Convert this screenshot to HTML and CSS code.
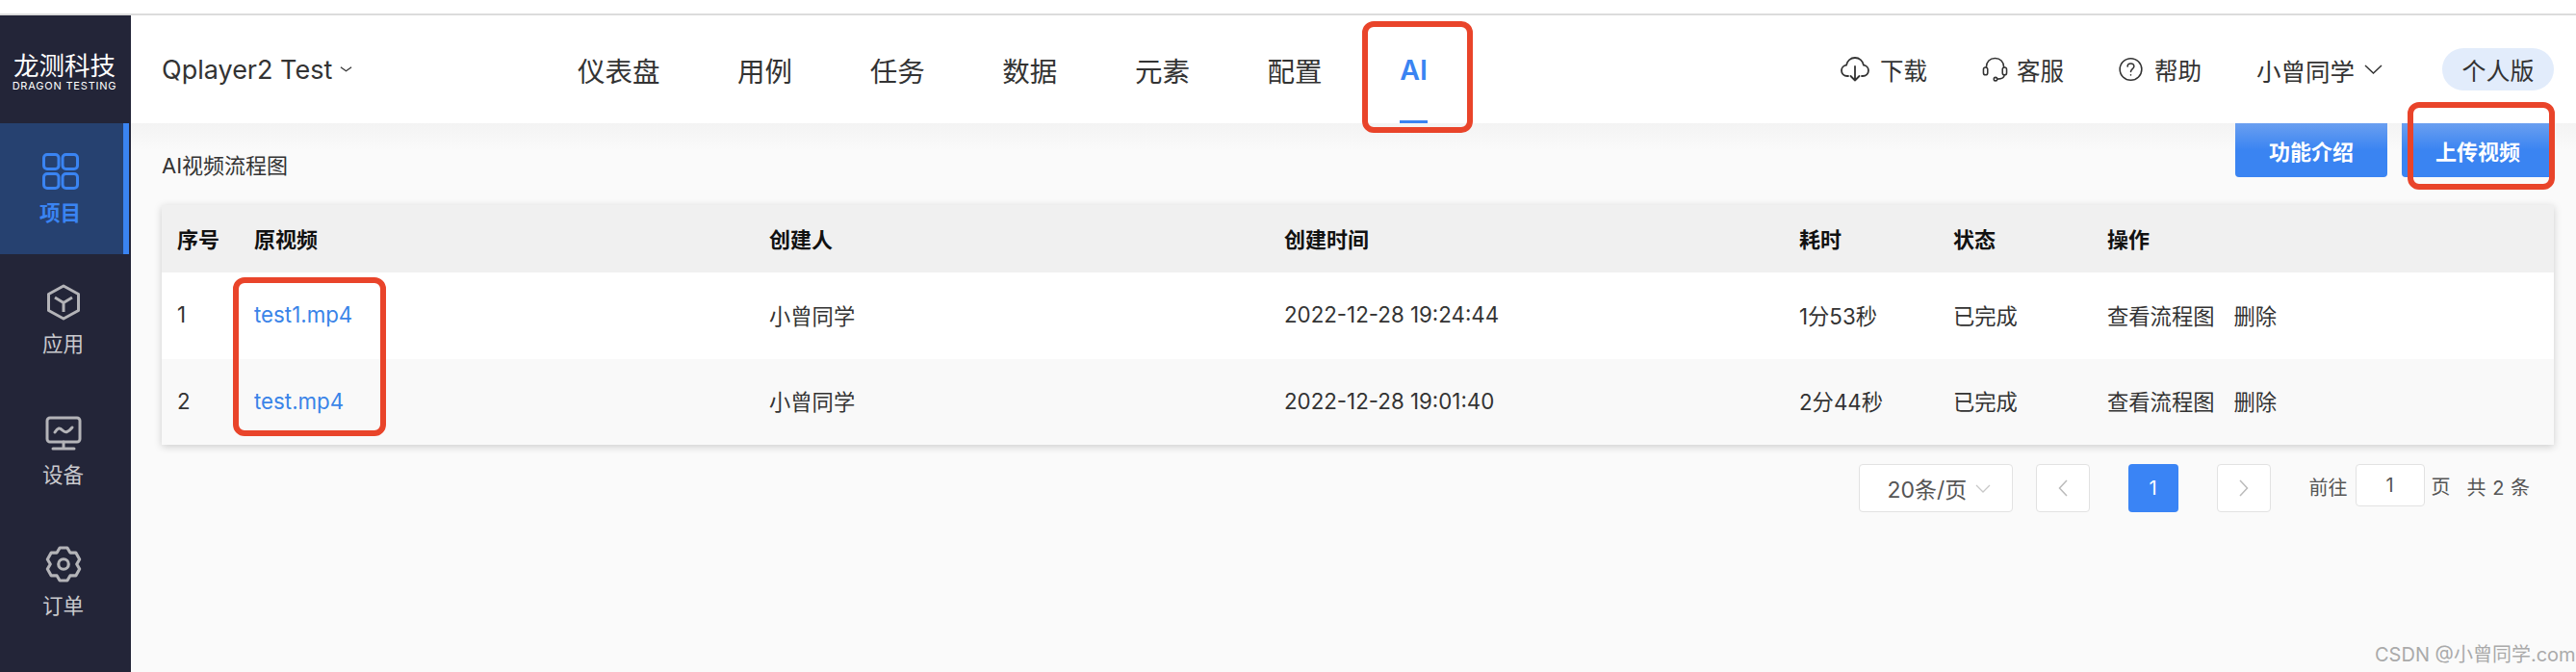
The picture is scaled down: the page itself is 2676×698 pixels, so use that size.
FILE: index.html
```html
<!DOCTYPE html>
<html lang="zh-CN">
<head>
  <meta charset="UTF-8" />
  <title>AI视频流程图</title>
  <link rel="stylesheet" href="styles.css">
</head>
<body>
  <div class="top-strip"></div>
  <div class="app">
    <!-- sidebar -->
    <aside class="sidebar">
      <div class="logo">
        <div class="logo-cn">龙测科技</div>
        <div class="logo-en">DRAGON TESTING</div>
      </div>
      <a class="side-item active">
        <svg class="side-icon" viewBox="0 0 38 38" fill="none" stroke="currentColor" stroke-width="3">
          <rect x="1.5" y="1.5" width="15.5" height="15" rx="3.5"/>
          <rect x="21" y="1.5" width="15.5" height="15" rx="3.5"/>
          <rect x="1.5" y="21.5" width="15.5" height="15" rx="3.5"/>
          <rect x="21" y="21.5" width="15.5" height="15" rx="3.5"/>
        </svg>
        <span>项目</span>
      </a>
      <a class="side-item">
        <svg class="side-icon" viewBox="0 0 38 38" fill="none" stroke="currentColor" stroke-width="3" stroke-linejoin="round">
          <path d="M19 2 L34.5 10.5 V27.5 L19 36 L3.500 27.500 V10.500 Z"/>
          <path d="M10 14 L19 19.500 L28 14 M19 19.500 V29"/>
        </svg>
        <span>应用</span>
      </a>
      <a class="side-item">
        <svg class="side-icon" viewBox="0 0 38 36" fill="none" stroke="currentColor" stroke-width="3" stroke-linecap="round" stroke-linejoin="round">
          <rect x="2" y="2" width="34" height="25" rx="3"/>
          <path d="M10 17 C13 12 15 12 18 15 C21 18 24 17 28 12"/>
          <path d="M19 27 V33 M8 34 H30"/>
        </svg>
        <span>设备</span>
      </a>
      <a class="side-item">
        <svg class="side-icon" viewBox="0 0 36 36" fill="none" stroke="currentColor" stroke-width="3" stroke-linejoin="round">
          <path d="M14.3 1.900 H21.700 L24.500 6.700 H30.100 L33.800 13.200 L31 18 L33.800 22.800 L30.100 29.300 H24.500 L21.700 34.100 H14.300 L11.500 29.300 H5.900 L2.200 22.800 L5 18 L2.200 13.200 L5.900 6.700 H11.500 Z"/>
          <circle cx="18" cy="18" r="5"/>
        </svg>
        <span>订单</span>
      </a>
    </aside>

    <div class="content">
      <!-- top nav -->
      <header class="header">
        <div class="project">
          Qplayer2 Test
          <svg class="chevron-sm" viewBox="0 0 14 6" fill="none" stroke="currentColor" stroke-width="1.300"><path d="M1 .5 L7 5 L13 .5"/></svg>
        </div>
        <nav class="nav">
          <a>仪表盘</a>
          <a>用例</a>
          <a>任务</a>
          <a>数据</a>
          <a>元素</a>
          <a>配置</a>
          <a class="current">AI</a>
        </nav>
        <div class="tools">
          <a class="tool">
            <svg class="tool-icon icon-cloud" viewBox="0 0 30 26" fill="none" stroke="currentColor" stroke-width="1.800" stroke-linecap="round" stroke-linejoin="round">
              <path d="M8 20 H7 C3.500 20 1 17.500 1 14.300 C1 11.300 3.200 9 6 8.700 C7 4.200 10.500 1 15 1 C19.500 1 23 4.200 24 8.700 C26.800 9 29 11.300 29 14.300 C29 17.500 26.500 20 23 20 H22"/>
              <path d="M15 10 V24.500 M10.500 20 L15 24.500 L19.500 20"/>
            </svg>
            下载
          </a>
          <a class="tool">
            <svg class="tool-icon icon-head" viewBox="0 0 28 26" fill="none" stroke="currentColor" stroke-width="1.600" stroke-linecap="round">
              <path d="M4.500 11 C4.500 5 8.500 1 14 1 C19.500 1 23.500 5 23.500 11"/>
              <rect x="1.500" y="11" width="4.500" height="8" rx="2.200"/>
              <rect x="22" y="11" width="4.500" height="8" rx="2.200"/>
              <path d="M24 19 C24 22 21 23.500 16.500 23.500"/>
              <circle cx="14.500" cy="23.500" r="1.800"/>
            </svg>
            客服
          </a>
          <a class="tool">
            <svg class="tool-icon icon-help" viewBox="0 0 26 26" fill="none" stroke="currentColor" stroke-width="1.600" stroke-linecap="round">
              <circle cx="13" cy="13" r="11.800"/>
              <path d="M9.500 10 C9.500 8 11 6.800 13 6.800 C15 6.800 16.500 8 16.500 10 C16.500 12.500 13 12.800 13 15.500"/>
              <path d="M13 19 V19.200"/>
            </svg>
            帮助
          </a>
          <a class="tool user">
            小曾同学
            <svg class="chevron" viewBox="0 0 19 10" fill="none" stroke="currentColor" stroke-width="1.500"><path d="M1 1 L9.500 9 L18 1"/></svg>
          </a>
          <span class="edition">个人版</span>
        </div>
      </header>

      <main class="main">
        <div class="page-head">
          <div class="page-title">AI视频流程图</div>
          <div class="actions">
            <button class="btn">功能介绍</button>
            <button class="btn">上传视频</button>
          </div>
        </div>

        <table class="table">
          <thead>
            <tr>
              <th class="col-no">序号</th>
              <th class="col-wide">原视频</th>
              <th class="col-wide">创建人</th>
              <th class="col-wide">创建时间</th>
              <th class="col-mid">耗时</th>
              <th class="col-mid">状态</th>
              <th>操作</th>
            </tr>
          </thead>
          <tbody>
            <tr>
              <td>1</td>
              <td><a class="link">test1.mp4</a></td>
              <td>小曾同学</td>
              <td>2022-12-28 19:24:44</td>
              <td>1分53秒</td>
              <td>已完成</td>
              <td class="ops"><a>查看流程图</a><a>删除</a></td>
            </tr>
            <tr>
              <td>2</td>
              <td><a class="link">test.mp4</a></td>
              <td>小曾同学</td>
              <td>2022-12-28 19:01:40</td>
              <td>2分44秒</td>
              <td>已完成</td>
              <td class="ops"><a>查看流程图</a><a>删除</a></td>
            </tr>
          </tbody>
        </table>

        <div class="pager">
          <div class="page-size">
            20条/页
            <svg class="chevron light" viewBox="0 0 16 9" fill="none" stroke="currentColor" stroke-width="1.300"><path d="M1 1 L8 8 L15 1"/></svg>
          </div>
          <button class="page-btn">
            <svg class="arrow" viewBox="0 0 10 18" fill="none" stroke="currentColor" stroke-width="1.500"><path d="M9 1 L1.500 9 L9 17"/></svg>
          </button>
          <button class="page-num">1</button>
          <button class="page-btn">
            <svg class="arrow" viewBox="0 0 10 18" fill="none" stroke="currentColor" stroke-width="1.500"><path d="M1 1 L8.500 9 L1 17"/></svg>
          </button>
          <span class="goto">前往</span>
          <span class="page-input">1</span>
          <span class="goto-unit">页</span>
          <span class="total">共 2 条</span>
        </div>
      </main>
    </div>
  </div>

  <!-- annotations on the screenshot -->
  <div class="mark mark-ai"></div>
  <div class="mark mark-upload"></div>
  <div class="mark mark-files"></div>
  <div class="watermark">CSDN @小曾同学.com</div>
</body>
</html>
```

FILE: styles.css
```css
* {
  box-sizing: border-box;
}
html, body {
  height: 100%;
}
body {
  margin: 0;
  font-family: Inter, "Noto Sans CJK SC", sans-serif;
  color: #333;
  background: #fff;
  overflow: hidden;
}
.top-strip {
  height: 16px;
  border-bottom: 2px solid #dcdcdc;
}
.app {
  display: flex;
  height: 682px;
}

/* sidebar */
.sidebar {
  width: 136px;
  flex-shrink: 0;
  background: #232538;
  color: #c9c9cd;
}
.logo {
  height: 112px;
  padding: 38px 2px 0 0;
  text-align: center;
  color: #fff;
}
.logo-cn {
  font-size: 26.5px;
  line-height: 28px;
}
.logo-en {
  margin-top: 1px;
  font-size: 11px;
  line-height: 12px;
  letter-spacing: .8px;
  white-space: nowrap;
}
.side-item {
  display: flex;
  flex-direction: column;
  align-items: center;
  height: 136px;
  padding: 31px 5px 0 0;
}
.side-item span {
  margin-top: 8.500px;
  font-size: 21.5px;
  line-height: 30px;
}
.side-icon {
  width: 38px;
  height: 38px;
  color: #b4b4b8;
}
.side-item.active {
  width: 134px;
  padding-right: 3px;
  background: #264170;
  border-right: 6px solid #3a84f2;
  color: #3a84f2;
}
.side-item.active span {
  font-weight: 600;
}
.side-item.active .side-icon {
  color: #3a84f2;
}

/* header */
.content {
  flex: 1;
  display: flex;
  flex-direction: column;
  min-width: 0;
}
.header {
  display: flex;
  align-items: stretch;
  height: 112px;
  padding: 0 23px 0 32px;
  background: #fff;
}
.project {
  display: flex;
  align-items: center;
  width: 432px;
  font-size: 27px;
  color: #333;
}
.chevron-sm {
  width: 13px;
  height: 6px;
  margin-left: 8px;
}
.nav {
  display: flex;
  gap: 80.600px;
  font-size: 28.5px;
  color: #333;
}
.nav a {
  display: flex;
  align-items: center;
  padding-top: 3px;
  border-bottom: 3px solid transparent;
}
.nav .current {
  color: #3a84f2;
  font-weight: 600;
  border-bottom-color: #3a84f2;
}
.tools {
  display: flex;
  align-items: center;
  margin-left: auto;
  font-size: 24.5px;
}
.tool {
  display: flex;
  align-items: center;
  margin-right: 57px;
}
.tool-icon {
  height: 26px;
}
.icon-cloud {
  width: 30px;
  margin-right: 11px;
}
.icon-head {
  width: 27px;
  margin-right: 9px;
}
.icon-help {
  width: 25px;
  margin-right: 12px;
}
.tool.user {
  font-size: 25.5px;
  margin-right: 62px;
}
.chevron {
  width: 19px;
  height: 10px;
  margin-left: 10px;
}
.edition {
  display: flex;
  align-items: center;
  justify-content: center;
  width: 116px;
  height: 44px;
  border-radius: 22px;
  background: #e2ecfb;
  font-size: 25px;
}

/* main */
.main {
  flex: 1;
  padding: 0 23px 0 32px;
  background: linear-gradient(#f3f3f3, #fafafa 28px);
}
.page-head {
  display: flex;
  justify-content: space-between;
}
.page-title {
  margin-top: 32px;
  font-size: 22px;
  line-height: 24px;
}
.actions {
  display: flex;
  gap: 15px;
}
.btn {
  width: 158px;
  height: 56px;
  border: 0;
  border-radius: 0 0 4px 4px;
  background: linear-gradient(#6a9ff0, #3a84f2 50%);
  color: #fff;
  font: 600 22px Inter, "Noto Sans CJK SC", sans-serif;
}

/* table */
.table {
  width: 100%;
  margin-top: 29px;
  border-collapse: collapse;
  table-layout: fixed;
  background: #fff;
  box-shadow: 0 2px 8px rgba(0, 0, 0, .18);
  font-size: 22.3px;
}
.table th, .table td {
  padding: 0 16px 2px;
  text-align: left;
}
.table th {
  height: 70px;
  background: #f0f0f0;
  color: #111;
  font-size: 22px;
  font-weight: 600;
}
.table td {
  height: 89.500px;
}
.table tbody tr:nth-child(2) {
  background: #f9f9f9;
}
.col-no { width: 80px; }
.col-wide { width: 535px; }
.col-mid { width: 160px; }
.link {
  color: #3a84e8;
}
.ops a {
  margin-right: 20px;
}

/* pagination */
.pager {
  display: flex;
  align-items: flex-start;
  margin-top: 20px;
  padding-right: 25px;
  justify-content: flex-end;
  font-size: 20px;
  color: #555;
}
.page-size {
  display: flex;
  align-items: center;
  justify-content: space-between;
  width: 160px;
  height: 50px;
  padding: 0 22px 0 29px;
  background: #fff;
  border: 1px solid #e2e2e2;
  border-radius: 4px;
  font-size: 23px;
}
.chevron.light {
  width: 16px;
  height: 9px;
  margin-left: 0;
  color: #c8c8c8;
}
.page-btn {
  width: 56px;
  height: 50px;
  margin-left: 24px;
  padding: 0;
  background: #fff;
  border: 1px solid #e2e2e2;
  border-radius: 4px;
  color: #bbb;
}
.arrow {
  width: 10px;
  height: 18px;
  vertical-align: middle;
}
.page-num {
  width: 52px;
  height: 50px;
  margin-left: 40px;
  margin-right: -16px;
  padding: 0;
  background: #3a84f5;
  border: 0;
  border-radius: 4px;
  color: #fff;
  font: 20px Inter, sans-serif;
}
.page-num + .page-btn {
  margin-left: 56px;
}
.goto {
  margin-left: 40px;
  line-height: 50px;
}
.page-input {
  width: 72px;
  height: 44px;
  margin-left: 8px;
  background: #fff;
  border: 1px solid #e2e2e2;
  border-radius: 4px;
  text-align: center;
  line-height: 42px;
}
.goto-unit {
  margin-left: 7px;
  line-height: 48px;
}
.total {
  margin-left: 17px;
  line-height: 50px;
  word-spacing: 1px;
}

/* annotations */
.mark {
  position: absolute;
  border: 6px solid #e9442a;
  border-radius: 12px;
}
.mark-ai {
  left: 1415px;
  top: 22px;
  width: 115px;
  height: 116px;
}
.mark-upload {
  left: 2501px;
  top: 106px;
  width: 153px;
  height: 91px;
}
.mark-files {
  left: 242px;
  top: 288px;
  width: 159px;
  height: 165px;
}
.watermark {
  position: absolute;
  left: 2467px;
  top: 666px;
  font-size: 20px;
  line-height: 28px;
  color: #aaa;
  white-space: nowrap;
}
```
